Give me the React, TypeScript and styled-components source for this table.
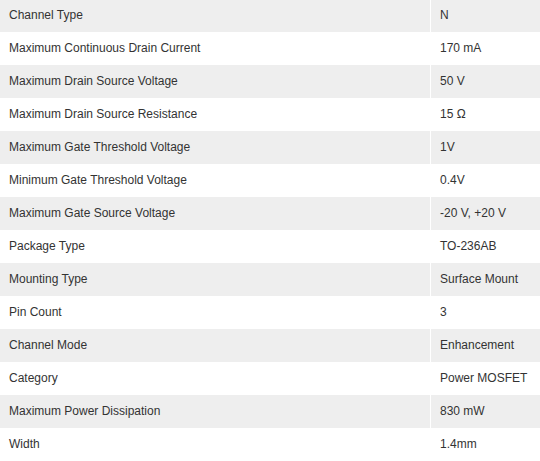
import React from "react";
import styled, { createGlobalStyle } from "styled-components";

const Global = createGlobalStyle`
  html, body { margin: 0; padding: 0; background: #fff; }
  body { font-family: "Liberation Sans", Arial, sans-serif; }
`;

const Table = styled.div`
  width: 540px;
  margin-top: -1px;
  display: grid;
  grid-template-columns: 430px 1fr;
  column-gap: 1px;
  background: #ffffff;
`;

const Cell = styled.div<{ $shaded: boolean }>`
  display: flex;
  align-items: center;
  height: 33px;
  box-sizing: border-box;
  padding: 0 9px 2px;
  font-size: 12px;
  color: #333333;
  background: ${(p) => (p.$shaded ? "#eeeeee" : "#ffffff")};
  white-space: nowrap;
`;

const rows: [string, string][] = [
  ["Channel Type", "N"],
  ["Maximum Continuous Drain Current", "170 mA"],
  ["Maximum Drain Source Voltage", "50 V"],
  ["Maximum Drain Source Resistance", "15 Ω"],
  ["Maximum Gate Threshold Voltage", "1V"],
  ["Minimum Gate Threshold Voltage", "0.4V"],
  ["Maximum Gate Source Voltage", "-20 V, +20 V"],
  ["Package Type", "TO-236AB"],
  ["Mounting Type", "Surface Mount"],
  ["Pin Count", "3"],
  ["Channel Mode", "Enhancement"],
  ["Category", "Power MOSFET"],
  ["Maximum Power Dissipation", "830 mW"],
  ["Width", "1.4mm"],
];

export default function App() {
  return (
    <>
      <Global />
      <Table>
        {rows.map(([k, v], i) => (
          <React.Fragment key={k}>
            <Cell $shaded={i % 2 === 0}>{k}</Cell>
            <Cell $shaded={i % 2 === 0}>{v}</Cell>
          </React.Fragment>
        ))}
      </Table>
    </>
  );
}
